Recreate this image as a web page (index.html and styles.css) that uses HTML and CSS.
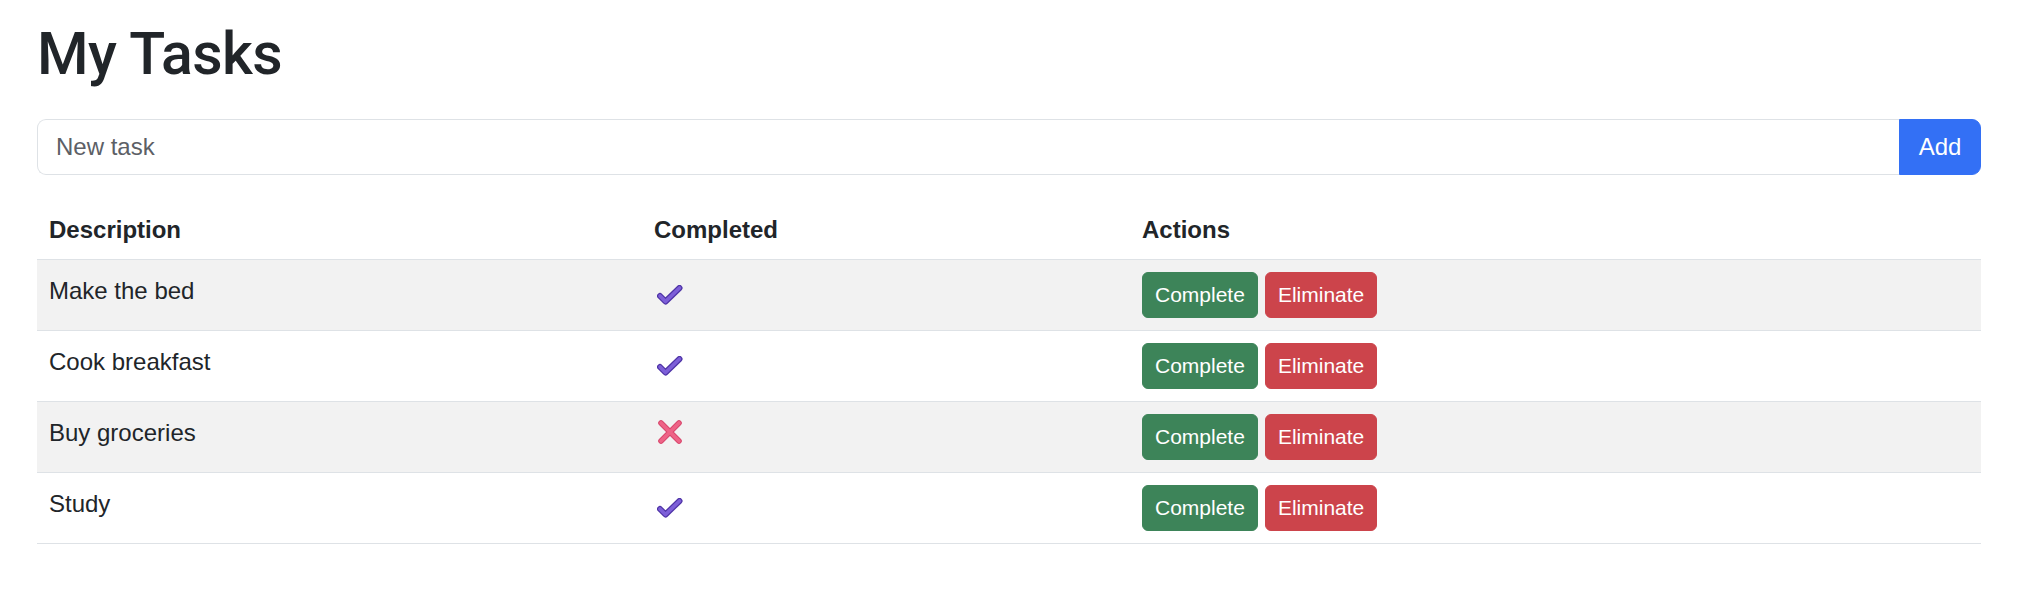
FILE: index.html
```html
<!DOCTYPE html>
<html lang="en">
<head>
<meta charset="utf-8">
<title>My Tasks</title>
<link rel="stylesheet" href="styles.css">
</head>
<body>
<main class="page">
  <h1 class="title">My Tasks</h1>
  <form class="input-group">
    <input class="task-input" type="text" placeholder="New task">
    <button class="btn btn-add" type="button">Add</button>
  </form>
  <table class="tasks">
    <colgroup>
      <col class="col-desc">
      <col class="col-done">
      <col class="col-actions">
    </colgroup>
    <thead>
      <tr><th>Description</th><th>Completed</th><th>Actions</th></tr>
    </thead>
    <tbody>
      <tr class="striped">
        <td>Make the bed</td>
        <td><svg class="icon-check" width="26" height="20" viewBox="0 0 26 20"><path d="M3 11 L8.5 16.5 L22.5 3" fill="none" stroke="#4e33a6" stroke-width="6" stroke-linecap="round" stroke-linejoin="round"/><path d="M3 11 L8.5 16.5 L22.5 3" fill="none" stroke="#7d5fd8" stroke-width="3.6" stroke-linecap="round" stroke-linejoin="round"/></svg></td>
        <td class="actions"><button class="btn btn-sm btn-complete">Complete</button><button class="btn btn-sm btn-eliminate">Eliminate</button></td>
      </tr>
      <tr>
        <td>Cook breakfast</td>
        <td><svg class="icon-check" width="26" height="20" viewBox="0 0 26 20"><path d="M3 11 L8.5 16.5 L22.5 3" fill="none" stroke="#4e33a6" stroke-width="6" stroke-linecap="round" stroke-linejoin="round"/><path d="M3 11 L8.5 16.5 L22.5 3" fill="none" stroke="#7d5fd8" stroke-width="3.6" stroke-linecap="round" stroke-linejoin="round"/></svg></td>
        <td class="actions"><button class="btn btn-sm btn-complete">Complete</button><button class="btn btn-sm btn-eliminate">Eliminate</button></td>
      </tr>
      <tr class="striped">
        <td>Buy groceries</td>
        <td><svg class="icon-x" width="26" height="26" viewBox="0 0 26 26"><path d="M4 4 L22 22 M22 4 L4 22" fill="none" stroke="#d9466c" stroke-width="5.6" stroke-linecap="round"/><path d="M4 4 L22 22 M22 4 L4 22" fill="none" stroke="#ee6487" stroke-width="3.6" stroke-linecap="round"/></svg></td>
        <td class="actions"><button class="btn btn-sm btn-complete">Complete</button><button class="btn btn-sm btn-eliminate">Eliminate</button></td>
      </tr>
      <tr>
        <td>Study</td>
        <td><svg class="icon-check" width="26" height="20" viewBox="0 0 26 20"><path d="M3 11 L8.5 16.5 L22.5 3" fill="none" stroke="#4e33a6" stroke-width="6" stroke-linecap="round" stroke-linejoin="round"/><path d="M3 11 L8.5 16.5 L22.5 3" fill="none" stroke="#7d5fd8" stroke-width="3.6" stroke-linecap="round" stroke-linejoin="round"/></svg></td>
        <td class="actions"><button class="btn btn-sm btn-complete">Complete</button><button class="btn btn-sm btn-eliminate">Eliminate</button></td>
      </tr>
    </tbody>
  </table>
</main>
</body>
</html>
```

FILE: styles.css
```css
* { box-sizing: border-box; }

body {
  margin: 0;
  background: #ffffff;
  color: #212529;
  font-family: "Liberation Sans", Arial, sans-serif;
  font-size: 24px;
  line-height: 36px;
}

.page {
  width: 1944px;
  margin-left: 37px;
  padding-top: 19px;
}

.title {
  margin: 0 0 30px 0;
  font-family: Roboto, "Liberation Sans", sans-serif;
  font-size: 59px;
  line-height: 70px;
  font-weight: 500;
  letter-spacing: -0.5px;
  color: #212529;
}

.input-group {
  display: flex;
  margin: 0 0 24px 0;
}

.task-input {
  flex: 1;
  height: 56px;
  padding: 9px 18px;
  border: 1px solid #dee2e6;
  border-right: none;
  border-radius: 9px 0 0 9px;
  font-family: inherit;
  font-size: 24px;
  line-height: 36px;
  color: #212529;
  outline: none;
}

.task-input::placeholder {
  color: #5c6066;
}

.btn {
  font-family: inherit;
  border: 1px solid transparent;
  color: #ffffff;
  cursor: pointer;
}

.btn-add {
  width: 82px;
  height: 56px;
  padding: 9px 0;
  font-size: 24px;
  line-height: 36px;
  background: #3370f5;
  border-color: #3370f5;
  border-radius: 0 9px 9px 0;
}

.tasks {
  width: 100%;
  border-collapse: collapse;
  table-layout: fixed;
}

.col-desc { width: 605px; }
.col-done { width: 488px; }
.col-actions { width: auto; }

.tasks th,
.tasks td {
  text-align: left;
  vertical-align: top;
  border-bottom: 1px solid #dee2e6;
}

.tasks th {
  padding: 13px 12px 10px;
  font-weight: 700;
  height: 60px;
}

.tasks td {
  padding: 13px 12px 11px;
  height: 71px;
}

.tasks tr.striped td {
  background: #f2f2f2;
}

.icon-check {
  display: block;
  margin: 12px 0 0 3px;
}

.icon-x {
  display: block;
  margin: 4px 0 0 3px;
}

.actions {
  white-space: nowrap;
}

.tasks td.actions {
  padding-top: 12px;
}

.btn-sm {
  height: 46px;
  padding: 0 12px;
  font-size: 21px;
  line-height: 44px;
  border-radius: 6px;
  vertical-align: top;
}

.btn-sm + .btn-sm {
  margin-left: 7px;
}

.btn-complete {
  background: #3d8459;
  border-color: #3d8459;
}

.btn-eliminate {
  background: #cc444b;
  border-color: #cc444b;
}
```
